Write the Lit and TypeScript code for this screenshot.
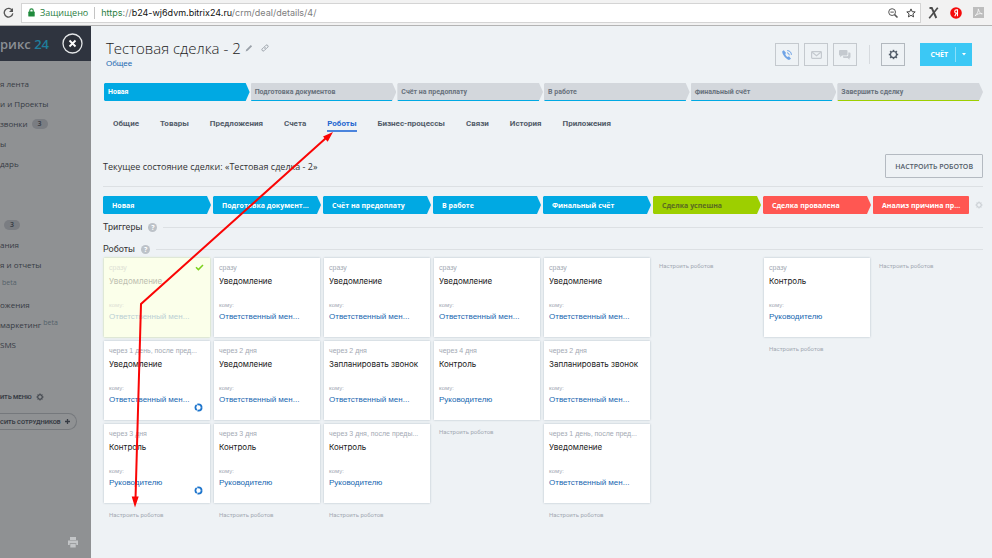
import { LitElement, html, css, svg, nothing } from "lit";
import { customElement } from "lit/decorators.js";
import { classMap } from "lit/directives/class-map.js";

interface Robot {
  when: string;
  title: string;
  who: string;
  done?: boolean;
  busy?: boolean;
}

const manager = "Ответственный мен...";
const head = "Руководителю";
const notify = (when: string, extra: Partial<Robot> = {}): Robot => ({ when, title: "Уведомление", who: manager, ...extra });
const control = (when: string, extra: Partial<Robot> = {}): Robot => ({ when, title: "Контроль", who: head, ...extra });
const call = (when: string): Robot => ({ when, title: "Запланировать звонок", who: manager });

const columns: { stage: string; kind: string; robots: Robot[] }[] = [
  {
    stage: "Новая",
    kind: "blue",
    robots: [notify("сразу", { done: true }), notify("через 1 день, после пред...", { busy: true }), control("через 3 дня", { busy: true })],
  },
  { stage: "Подготовка документ...", kind: "blue", robots: [notify("сразу"), notify("через 2 дня"), control("через 3 дня")] },
  { stage: "Счёт на предоплату", kind: "blue", robots: [notify("сразу"), call("через 2 дня"), control("через 3 дня, после преды...")] },
  { stage: "В работе", kind: "blue", robots: [notify("сразу"), control("через 4 дня")] },
  { stage: "Финальный счёт", kind: "blue", robots: [notify("сразу"), call("через 2 дня"), notify("через 1 день, после пред...")] },
  { stage: "Сделка успешна", kind: "green", robots: [] },
  { stage: "Сделка провалена", kind: "red", robots: [control("сразу")] },
  { stage: "Анализ причина пр...", kind: "red last", robots: [] },
];

const dealStages = ["Новая", "Подготовка документов", "Счёт на предоплату", "В работе", "Финальный счёт", "Завершить сделку"];
const tabs = ["Общие", "Товары", "Предложения", "Счета", "Роботы", "Бизнес-процессы", "Связи", "История", "Приложения"];

interface Item {
  text: string;
  count?: number;
  beta?: boolean;
}

const menu: Item[][] = [
  [{ text: "я лента" }, { text: "и и Проекты" }, { text: "звонки", count: 3 }, { text: "ы" }, { text: "дарь" }],
  [
    { text: "", count: 3 },
    { text: "ания" },
    { text: "я и отчеты" },
    { text: "", beta: true },
    { text: "ожения" },
    { text: "маркетинг", beta: true },
    { text: "SMS" },
  ],
];

const gear = (size: number) => html`<svg width=${size} height=${size} viewBox="0 0 12 12" aria-hidden="true">
  <circle cx="6" cy="6" r="3.3" fill="none" stroke="currentColor" stroke-width="1.3" />
  ${[0, 45, 90, 135, 180, 225, 270, 315].map(
    (a) => svg`<rect x="5.1" y="0.9" width="1.8" height="1.8" fill="currentColor" transform="rotate(${a} 6 6)" />`,
  )}
</svg>`;

@customElement("browser-bar")
class BrowserBar extends LitElement {
  static styles = css`
    :host {
      display: flex;
      align-items: center;
      height: 25px;
      background: #f2f2f2;
      border-bottom: 1px solid #b4b4b4;
      font: 9px/14px "Open Sans", sans-serif;
    }
    .reload {
      border: 0;
      padding: 0;
      margin: 0 7px 0 3px;
      width: 11px;
      height: 11px;
      background: none;
    }
    svg {
      display: block;
      flex: none;
    }
    .box {
      flex: 1;
      display: flex;
      align-items: center;
      height: 18px;
      padding: 0 4px 0 6px;
      background: #fff;
      border: 1px solid #d4d4d4;
    }
    .safe {
      color: #2b8043;
      margin: 0 6px 0 5px;
      padding-right: 6px;
      border-right: 1px solid #c4c4c4;
      line-height: 12px;
    }
    .url {
      flex: 1;
      font: 9px/14px Inter, sans-serif;
      color: #7d7d7d;
    }
    .proto {
      color: #2b8043;
    }
    .host {
      color: #111;
    }
    .star {
      margin-left: 8px;
    }
    .ext {
      display: flex;
      align-items: center;
      gap: 11px;
      padding: 0 8px 0 7px;
    }
  `;
  render() {
    return html`
      <button class="reload" aria-label="Обновить">
        <svg width="11" height="11" viewBox="0 0 11 11"><path d="M9.3 3.6A4.3 4.3 0 1 0 9.8 6.4" fill="none" stroke="#555" stroke-width="1.3" /><path d="M10 1v4H6z" fill="#555" /></svg>
      </button>
      <div class="box">
        <svg width="7" height="9" viewBox="0 0 7 9"><rect x=".3" y="3.6" width="6.4" height="5" rx=".6" fill="#1f8a3c" /><path d="M1.8 4V2.6a1.7 1.7 0 0 1 3.4 0V4" fill="none" stroke="#1f8a3c" stroke-width="1.1" /></svg>
        <span class="safe">Защищено</span>
        <span class="url"><span class="proto">https</span>://<span class="host">b24-wj6dvm.bitrix24.ru</span>/crm/deal/details/4/</span>
        <svg width="10" height="10" viewBox="0 0 10 10"><g fill="none" stroke="#555"><circle cx="4.1" cy="4.1" r="3.4" /><path d="M2.4 4.1h3.4" /><path d="M6.6 6.6L9.5 9.5" stroke-width="1.5" /></g></svg>
        <svg class="star" width="10" height="10" viewBox="0 0 10 10"><path d="M5 .9l1.2 2.8 3 .2-2.3 2 .7 3L5 7.3 2.4 8.9l.7-3-2.3-2 3-.2z" fill="none" stroke="#444" stroke-width="1" /></svg>
      </div>
      <div class="ext">
        <svg width="11" height="12" viewBox="0 0 11 12"><path d="M1.5 1h2.3L8.3 11" fill="none" stroke="#4a4a4a" stroke-width="1.9" /><path d="M9.8.8L1.2 11.2" fill="none" stroke="#4a4a4a" stroke-width="1.7" /></svg>
        <svg width="12" height="12" viewBox="0 0 12 12"><circle cx="6" cy="6" r="5.8" fill="#f50a0a" /><path d="M7.5 9.2V2.9H6.4a1.6 1.6 0 0 0-.2 3.2h1.3M6.2 6.4L4.7 9.2" fill="none" stroke="#fff" stroke-width="1.1" /></svg>
        <svg width="11" height="11" viewBox="0 0 11 11"><rect width="11" height="11" fill="#bdbdbd" /><path d="M2 8.8C4 7.5 5.500 4.500 5.300 1.900c1 3.600 2 4.900 4 4.900C7 6.200 4.500 6.800 2 8.800z" fill="none" stroke="#f4f4f4" stroke-width=".9" /></svg>
      </div>
    `;
  }
}

@customElement("side-menu")
class SideMenu extends LitElement {
  static styles = css`
    :host {
      display: flex;
      flex-direction: column;
      flex: none;
      width: 91px;
      overflow: hidden;
      background: #8f9193;
      color: #363b43;
      font: 8px/20px "Open Sans", sans-serif;
    }
    .top {
      display: flex;
      align-items: center;
      justify-content: space-between;
      height: 35px;
      padding-right: 8px;
      background: #2f343f;
      color: #8b8f95;
      font-size: 13px;
      font-weight: 600;
    }
    .top b {
      color: #1f7d9b;
      font-weight: 600;
    }
    button {
      font: inherit;
      color: inherit;
      padding: 0;
      border: 0;
      background: none;
    }
    .close {
      height: 21px;
    }
    svg {
      display: block;
    }
    nav {
      display: flex;
      flex-direction: column;
      gap: 41px;
      margin-top: 13px;
    }
    nav a {
      display: flex;
      align-items: center;
      height: 20px;
      color: inherit;
      text-decoration: none;
      white-space: nowrap;
    }
    .count {
      margin-left: 4px;
      padding: 0 6px;
      border-radius: 5px;
      background: #7a7d82;
      font: 600 7px/10px "Open Sans", sans-serif;
    }
    sup {
      align-self: flex-start;
      margin-left: 2px;
      font-size: 7px;
      line-height: 16px;
      color: #54616a;
    }
    .setup {
      display: flex;
      align-items: center;
      gap: 4px;
      margin-top: 35px;
      font: bold 6px/14px Roboto, sans-serif;
    }
    .invite {
      align-self: flex-start;
      display: flex;
      align-items: center;
      gap: 4px;
      height: 17px;
      margin-top: 9px;
      padding-right: 6px;
      border: 1px solid #75787c;
      border-left: 0;
      border-radius: 0 9px 9px 0;
      font: bold 6px/15px Roboto, sans-serif;
    }
    .print {
      align-self: flex-end;
      margin: auto 13px 10px 0;
    }
  `;
  render() {
    return html`
      <div class="top">
        <span>рикс <b>24</b></span>
        <button class="close" aria-label="Закрыть">
          <svg width="21" height="21" viewBox="0 0 21 21"><circle cx="10.5" cy="10.5" r="9.5" fill="#2b2f38" stroke="#e4e6e8" stroke-width="1.3" /><path d="M7.5 7.5l6 6m0-6l-6 6" stroke="#fff" stroke-width="1.8" /></svg>
        </button>
      </div>
      <nav>
        ${menu.map(
          (group) => html`<div>
            ${group.map(
              (m) => html`<a href="#">${m.text ? html`<span>${m.text}</span>` : nothing}${m.count ? html`<span class="count">${m.count}</span>` : nothing}${m.beta ? html`<sup>beta</sup>` : nothing}</a>`,
            )}
          </div>`,
        )}
      </nav>
      <button class="setup">ИТЬ МЕНЮ ${gear(8)}</button>
      <button class="invite">СИТЬ СОТРУДНИКОВ
        <svg width="5" height="5" viewBox="0 0 5 5"><path d="M2.5 0v5M0 2.5h5" stroke="#363b43" stroke-width="1.3" /></svg>
      </button>
      <button class="print" aria-label="Печать">
        <svg width="10" height="11" viewBox="0 0 10 11"><path d="M2 0h6v3H2zM0 3.6h10V8H8.300V6.300H1.700V8H0zM2.300 7h5.400v3.500H2.300z" fill="#c3c5c7" /></svg>
      </button>
    `;
  }
}

@customElement("robot-card")
class RobotCard extends LitElement {
  static properties = { robot: { attribute: false } };
  declare robot: Robot;
  static styles = css`
    :host {
      display: block;
    }
    .card {
      position: relative;
      box-sizing: border-box;
      height: 79px;
      padding: 5px 4px 0 5px;
      background: #fff;
      box-shadow: 0 0 2px rgba(70, 90, 110, 0.35);
      font-family: "Liberation Sans", sans-serif;
      white-space: nowrap;
    }
    .card > * {
      display: block;
    }
    .when {
      font-size: 7px;
      line-height: 10px;
      color: #a3a9b3;
    }
    .title {
      margin-top: 2px;
      font-family: Inter, sans-serif;
      font-size: 8px;
      line-height: 12px;
      color: #222;
    }
    .label {
      margin-top: 13px;
      font-size: 6px;
      line-height: 10px;
      color: #a3a9b3;
    }
    .who {
      font-size: 8px;
      line-height: 14px;
      color: #2067b0;
      text-decoration: none;
    }
    .done {
      background: #fbffea;
      box-shadow: 0 0 2px rgba(150, 180, 60, 0.5);
    }
    .done .when,
    .done .label {
      color: #dde1d5;
    }
    .done .title {
      color: #bdc0b0;
    }
    .done .who {
      color: #bacfd4;
    }
    .mark {
      position: absolute;
      right: 6px;
      top: 6px;
    }
    .ring {
      position: absolute;
      right: 7px;
      bottom: 8px;
    }
  `;
  render() {
    const r = this.robot;
    return html`<div class=${classMap({ card: true, done: !!r.done })}>
      <span class="when">${r.when}</span>
      <span class="title">${r.title}</span>
      <span class="label">кому:</span>
      <a class="who" href="#">${r.who}</a>
      ${r.done
        ? html`<svg class="mark" width="9" height="7" viewBox="0 0 9 7"><path d="M1 3.3l2.4 2.3L8 1" fill="none" stroke="#7bd11c" stroke-width="1.5" /></svg>`
        : nothing}
      ${r.busy
        ? html`<svg class="ring" width="9" height="9" viewBox="0 0 9 9"><circle cx="4.5" cy="4.5" r="3.1" fill="none" stroke="#1c74cc" stroke-width="1.8" stroke-dasharray="5.8 .7" /></svg>`
        : nothing}
    </div>`;
  }
}

@customElement("deal-page")
class DealPage extends LitElement {
  static styles = css`
    :host {
      display: block;
      flex: 1;
      min-width: 0;
      padding: 0 9px 0 12px;
      background: #eef2f5;
      color: #333;
      font-family: "Open Sans", sans-serif;
    }
    svg {
      display: block;
    }
    a {
      text-decoration: none;
      color: inherit;
    }
    button {
      font: inherit;
      color: inherit;
      margin: 0;
      padding: 0;
      background: none;
      border: 0;
    }
    header {
      display: flex;
      justify-content: space-between;
      height: 46px;
      padding: 11px 11px 0 3px;
    }
    .name,
    .marks {
      display: flex;
      align-items: center;
      gap: 4px;
      color: #9aa1a9;
    }
    .marks {
      gap: 8px;
    }
    h1 {
      margin: 0;
      font-size: 15px;
      line-height: 22px;
      font-weight: 300;
      color: #222;
    }
    .general {
      display: block;
      font: 8px/10px "Liberation Sans", sans-serif;
      color: #2067b0;
    }
    .tools {
      display: flex;
      height: 23px;
      margin-top: 6px;
      gap: 5px;
    }
    .tool {
      box-sizing: border-box;
      display: flex;
      align-items: center;
      justify-content: center;
      width: 24px;
      border: 1px solid #c4c9ce;
      color: #c4c9cf;
    }
    .tool.dark {
      border-color: #b2b8be;
      color: #525c69;
    }
    .divider {
      width: 1px;
      margin: 2px 6px 2px 7px;
      background: #d6dade;
    }
    .bill {
      display: flex;
      align-items: center;
      margin-left: 10px;
      background: #3bc8f5;
      color: #fff;
      font: bold 7px/15px "Open Sans", sans-serif;
    }
    .bill button:first-child {
      padding: 0 7px 0 10px;
      border-right: 1px solid #8bdffa;
    }
    .bill button:last-child {
      padding: 6px;
    }
    .stages {
      display: grid;
      grid-template-columns: repeat(6, minmax(0, 1fr));
      gap: 1px;
      margin-left: 1px;
      font: bold 7px/18px Roboto, sans-serif;
      color: #69727c;
    }
    .stage {
      height: 18px;
      padding-left: 4px;
      text-align: left;
      white-space: nowrap;
      background: linear-gradient(#00a9e3, #00a9e3) 0 100% / calc(100% - 4px) 1px no-repeat #d3d7dc;
      clip-path: polygon(1px 0, calc(100% - 4px) 0, 100% 50%, calc(100% - 4px) 100%, 1px 100%, 0 17px, 0 1px);
    }
    .stage:first-child {
      background: #00a9e3;
      color: #fff;
    }
    .stage:last-child {
      background-image: linear-gradient(#9dcf00, #9dcf00);
    }
    .tabs {
      display: flex;
      gap: 21px;
      margin: 16px 0 0 10px;
      font: bold 8px/13px Roboto, sans-serif;
      color: #525c69;
    }
    .tabs a {
      border-bottom: 2px solid transparent;
    }
    .tabs .on {
      color: #1f67d0;
      border-color: #4a84dd;
    }
    .state {
      display: flex;
      align-items: center;
      justify-content: space-between;
      margin-top: 22px;
      padding-bottom: 8px;
      border-bottom: 1px solid #dce0e3;
      font-size: 9px;
    }
    .setup {
      height: 24px;
      padding: 0 9px;
      border: 1px solid #b4bac1;
      border-radius: 1px;
      font-size: 7px;
      font-weight: 600;
      color: #525c69;
    }
    .board {
      display: grid;
      grid-template-columns: repeat(8, minmax(0, 1fr));
    }
    .bars {
      position: relative;
      margin-top: 9px;
    }
    .bar {
      height: 18px;
      margin-right: 2px;
      padding-left: 9px;
      font: bold 7px/19px "Open Sans", sans-serif;
      color: #fff;
      white-space: nowrap;
      clip-path: polygon(1px 0, calc(100% - 4px) 0, 100% 50%, calc(100% - 4px) 100%, 1px 100%, 0 17px, 0 1px);
    }
    .blue {
      background: #00a9e3;
    }
    .green {
      background: #9dcf00;
      color: #5a6a22;
    }
    .red {
      background: #ff5752;
    }
    .last {
      margin-right: 14px;
      clip-path: none;
      border-radius: 1px;
    }
    .gear {
      position: absolute;
      right: 0;
      top: 5px;
      color: #c6cbd0;
    }
    .section {
      display: flex;
      align-items: center;
      gap: 6px;
      margin: 6px 0 0;
      font: 9px/14px Roboto, sans-serif;
    }
    .section + .section {
      margin-top: 8px;
    }
    .section::after {
      content: "";
      flex: 1;
      height: 1px;
      background: #dce0e3;
    }
    .help {
      width: 9px;
      height: 9px;
      border-radius: 5px;
      background: #bcc2c8;
      color: #fff;
      font: bold 7px/9px "Open Sans", sans-serif;
      text-align: center;
    }
    .column {
      display: flex;
      flex-direction: column;
      gap: 4px;
      margin: 2px 3px 0 1px;
    }
    .more {
      padding-left: 5px;
      font: 6px/16px Roboto, sans-serif;
      color: #a3a9b3;
    }
  `;
  render() {
    return html`
      <header>
        <div>
          <div class="name">
            <h1>Тестовая сделка - 2</h1>
            <div class="marks">
              <svg width="8" height="8" viewBox="0 0 8 8"><path d="M.6 7.4l.7-2L5.8.9 7.1 2.2 2.6 6.7z" fill="currentColor" /></svg>
              <svg width="8" height="8" viewBox="0 0 8 8"><g fill="none" stroke="currentColor"><path d="M3.4 4.6a1.3 1.3 0 0 1 0-1.8L4.8 1.4a1.3 1.3 0 0 1 1.9 1.9L5.6 4.4" /><path d="M4.6 3.4a1.3 1.3 0 0 1 0 1.8L3.2 6.6A1.3 1.3 0 0 1 1.3 4.7L2.4 3.6" /></g></svg>
            </div>
          </div>
          <a class="general" href="#">Общее</a>
        </div>
        <div class="tools">
          <button class="tool" aria-label="Позвонить">
            <svg width="12" height="12" viewBox="0 0 12 12"><path d="M2.8 1.2L1.3 2.3C.6 4.6 4.8 10.3 8 11l2-1.3-2-2.5-1.5.8C5.5 7.3 4.5 6 4.2 4.9l.9-.8z" fill="#6fa3e6" /><path d="M6 3.7a2.6 2.6 0 0 1 2.3 2.6M6.2 1.6a4.4 4.4 0 0 1 4.2 4.3" fill="none" stroke="#6fa3e6" /></svg>
          </button>
          <button class="tool" aria-label="Письмо">
            <svg width="11" height="8" viewBox="0 0 11 8"><rect x=".6" y=".6" width="9.8" height="6.8" rx=".8" fill="none" stroke="currentColor" stroke-width="1.2" /><path d="M1.2 1.3l4.3 3.4 4.3-3.4" fill="none" stroke="currentColor" stroke-width="1.1" /></svg>
          </button>
          <button class="tool" aria-label="Чат">
            <svg width="12" height="10" viewBox="0 0 12 10"><path d="M1 0h6.500a1 1 0 0 1 1 1v3.500a1 1 0 0 1-1 1H3L1.200 7.200V5.500H1a1 1 0 0 1-1-1V1a1 1 0 0 1 1-1z" fill="currentColor" /><path d="M9.300 2.500h1.200a1 1 0 0 1 1 1v3.400a1 1 0 0 1-1 1v1.800L8.700 7.900H5a1 1 0 0 1-1-1v-.6h4a1.300 1.300 0 0 0 1.300-1.300z" fill="currentColor" /></svg>
          </button>
          <div class="divider"></div>
          <button class="tool dark" aria-label="Настройки">${gear(11)}</button>
          <div class="bill">
            <button>СЧЁТ</button>
            <button aria-label="Ещё"><svg width="4" height="3" viewBox="0 0 4 3"><path d="M0 0h4L2 2.5z" fill="#fff" /></svg></button>
          </div>
        </div>
      </header>
      <div class="stages">${dealStages.map((s) => html`<button class="stage">${s}</button>`)}</div>
      <nav class="tabs">${tabs.map((t) => html`<a href="#" class=${classMap({ on: t === "Роботы" })}>${t}</a>`)}</nav>
      <div class="state">
        <span>Текущее состояние сделки: «Тестовая сделка - 2»</span>
        <button class="setup">НАСТРОИТЬ РОБОТОВ</button>
      </div>
      <div class="board bars">
        ${columns.map((c) => html`<div class="bar ${c.kind}">${c.stage}</div>`)}
        <button class="gear" aria-label="Настройки">${gear(8)}</button>
      </div>
      <h2 class="section">Триггеры <span class="help">?</span></h2>
      <h2 class="section">Роботы <span class="help">?</span></h2>
      <div class="board">
        ${columns.map(
          (c) => html`<div class="column">
            ${c.robots.map((r) => html`<robot-card .robot=${r}></robot-card>`)}
            <a class="more" href="#">Настроить роботов</a>
          </div>`,
        )}
      </div>
    `;
  }
}

@customElement("app-root")
class AppRoot extends LitElement {
  static styles = css`
    :host {
      position: relative;
      display: flex;
      flex-direction: column;
      min-height: 100vh;
      overflow: hidden;
    }
    .body {
      flex: 1;
      display: flex;
    }
    .arrows {
      position: absolute;
      left: 0;
      top: 0;
      pointer-events: none;
    }
  `;
  render() {
    return html`
      <browser-bar></browser-bar>
      <div class="body">
        <side-menu></side-menu>
        <deal-page></deal-page>
      </div>
      <svg class="arrows" width="340" height="520" viewBox="0 0 340 520" aria-hidden="true">
        <path d="M326 138L141 304 135.5 499" fill="none" stroke="#fa0505" stroke-width="2" />
        <path d="M333 132l-5.3 9.8-4.7-5.2zM135 507.5l-3.3-11h7z" fill="#fa0505" />
      </svg>
    `;
  }
}
